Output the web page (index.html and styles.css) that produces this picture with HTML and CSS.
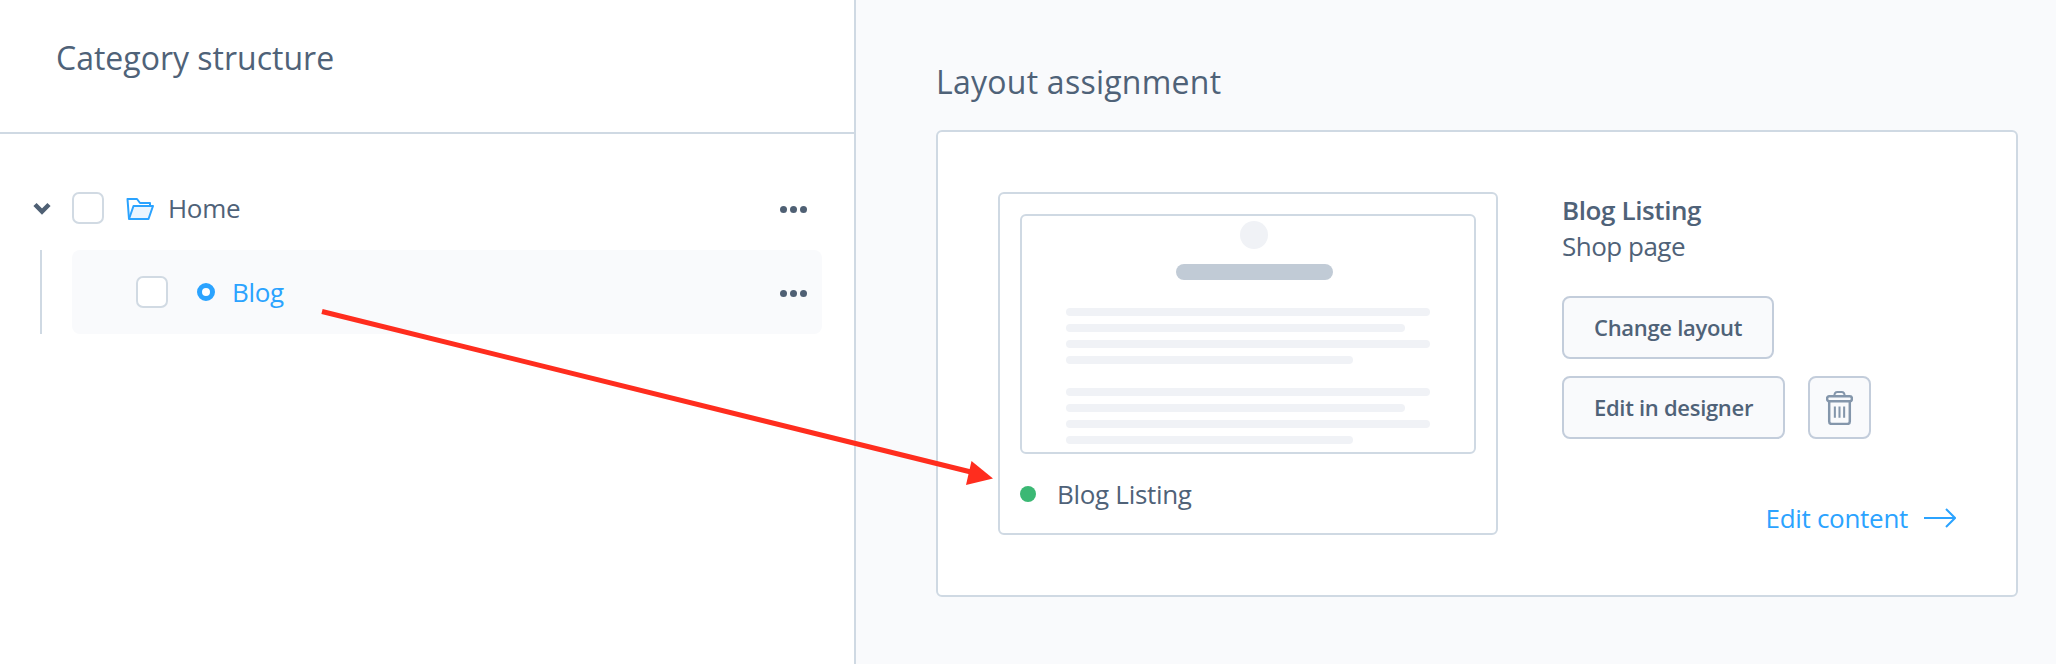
FILE: index.html
```html
<!DOCTYPE html>
<html lang="en">
<head>
    <meta charset="UTF-8">
    <meta name="viewport" content="width=device-width, initial-scale=1.0">
    <title>Category layout assignment</title>
    <link rel="stylesheet" href="styles.css">
</head>
<body>
    <div class="page">
        <div class="tree-panel">
            <div class="tree-header">
                <h2 class="panel-title">Category structure</h2>
            </div>
            <div class="tree">
                <div class="tree-row">
                    <svg class="chevron" width="18" height="13" viewBox="0 0 18 13"><path d="M2 2.500 9 9.500l7-7" fill="none" stroke="#4f6074" stroke-width="4.500"/></svg>
                    <span class="checkbox"></span>
                    <svg class="folder" width="28" height="24" viewBox="0 0 28 24">
                        <path d="M7.500 9H27l-4.500 13H3z" fill="#eaf5ff" stroke="#2ba3ff" stroke-width="2" stroke-linejoin="round"/>
                        <path d="M3 22 1.500 2H11l3 4h10v3" fill="none" stroke="#2ba3ff" stroke-width="2" stroke-linejoin="round"/>
                    </svg>
                    <span class="row-label">Home</span>
                    <span class="dots"><i></i><i></i><i></i></span>
                </div>
                <div class="child-wrap">
                    <div class="tree-row child">
                        <span class="checkbox"></span>
                        <span class="status-ring"></span>
                        <span class="row-label active">Blog</span>
                        <span class="dots"><i></i><i></i><i></i></span>
                    </div>
                </div>
            </div>
        </div>
        <div class="layout-panel">
            <h2 class="panel-title layout-title">Layout assignment</h2>
            <div class="card">
                <div class="preview">
                    <div class="thumb">
                        <div class="thumb-circle"></div>
                        <div class="thumb-bar"></div>
                        <div class="thumb-lines">
                            <div class="line w-full"></div>
                            <div class="line w-long"></div>
                            <div class="line w-full"></div>
                            <div class="line w-short"></div>
                        </div>
                        <div class="thumb-lines">
                            <div class="line w-full"></div>
                            <div class="line w-long"></div>
                            <div class="line w-full"></div>
                            <div class="line w-short"></div>
                        </div>
                    </div>
                    <div class="preview-label">
                        <span class="green-dot"></span>
                        <span>Blog Listing</span>
                    </div>
                </div>
                <div class="info">
                    <div class="info-name">Blog Listing</div>
                    <div class="info-type">Shop page</div>
                    <div class="actions">
                        <button class="btn">Change layout</button>
                        <div class="btn-row">
                            <button class="btn">Edit in designer</button>
                            <button class="btn icon-btn">
                                <svg width="27" height="34" viewBox="0 0 26 33" fill="none" stroke="#8496ab" stroke-width="2">
                                    <path d="M3 9v20.500a2.500 2.500 0 0 0 2.500 2.500h15a2.500 2.500 0 0 0 2.500-2.500V9" stroke-width="2.400"/>
                                    <rect x="1" y="5" width="24" height="5" rx="2" stroke-width="2.400"/>
                                    <path d="M8 5c0-2.500 1-4 3-4h4c2 0 3 1.500 3 4"/>
                                    <path d="M8.500 15v11M13 15v11M17.500 15v11"/>
                                </svg>
                            </button>
                        </div>
                    </div>
                    <a class="edit-link" href="#">Edit content
                        <svg width="32" height="20" viewBox="0 0 32 20" fill="none" stroke="#2ba3ff" stroke-width="2"><path d="M0 10h30M22 1l9 9-9 9"/></svg>
                    </a>
                </div>
            </div>
        </div>
        <!-- annotation drawn over both panels -->
        <svg class="annotation" width="2056" height="664" viewBox="0 0 2056 664">
            <path d="M322 311.500 975 473" stroke="#ff2d1e" stroke-width="5" fill="none"/>
            <path d="M971.500 461 993 478.500 966 485z" fill="#ff2d1e"/>
        </svg>
    </div>
</body>
</html>
```

FILE: styles.css
```css
* {
    box-sizing: border-box;
}
body {
    margin: 0;
    font-family: "Open Sans", "Noto Sans", sans-serif;
    color: #4f6278;
    background-color: #ffffff;
}
.page {
    position: relative;
    display: flex;
    width: 2056px;
    height: 664px;
    overflow: hidden;
}
.panel-title {
    margin: 0;
    font-size: 32px;
    font-weight: 400;
    line-height: 40px;
}
.layout-title {
    letter-spacing: 0.25px;
}

/* left side */
.tree-panel {
    width: 856px;
    border-right: 2px solid #cfd9e3;
}
.tree-header {
    height: 134px;
    padding: 38px 0 0 56px;
    border-bottom: 2px solid #cfd9e3;
}
.tree {
    padding: 42px 32px 0 32px;
}
.tree-row {
    display: flex;
    align-items: center;
    height: 64px;
}
.chevron {
    margin-right: 21px;
    margin-left: 1px;
}
.checkbox {
    flex: none;
    width: 32px;
    height: 32px;
    background-color: #ffffff;
    border: 2px solid #d1dae3;
    border-radius: 7px;
}
.folder {
    margin-top: 1px;
    margin-left: 22px;
}
.row-label {
    margin-left: 14px;
    font-size: 26px;
    letter-spacing: -0.3px;
}
.row-label.active {
    margin-left: 17px;
    color: #2ba3ff;
}
.dots {
    display: flex;
    gap: 3px;
    margin-top: 3px;
    margin-left: auto;
    margin-right: 15px;
}
.dots i {
    width: 7px;
    height: 7px;
    background-color: #4f6074;
    border-radius: 50%;
}
.child-wrap {
    margin-top: 10px;
    margin-left: 8px;
    padding-left: 30px;
    border-left: 2px solid #cfd9e3;
}
.child {
    height: 84px;
    padding-left: 64px;
    background-color: #f9fafc;
    border-radius: 8px;
}
.status-ring {
    width: 18px;
    height: 18px;
    margin-left: 29px;
    border: 5px solid #2ba3ff;
    border-radius: 50%;
    background-color: #ffffff;
}

/* right side */
.layout-panel {
    flex: 1;
    padding: 62px 38px 0 80px;
    background-color: #f9fafc;
}
.card {
    display: flex;
    gap: 64px;
    height: 467px;
    margin-top: 28px;
    padding: 60px;
    background-color: #ffffff;
    border: 2px solid #cfd9e3;
    border-radius: 6px;
}
.preview {
    width: 500px;
    padding: 20px;
    border: 2px solid #cfd9e3;
    border-radius: 6px;
}
.thumb {
    display: flex;
    flex-direction: column;
    align-items: center;
    height: 240px;
    padding-top: 5px;
    border: 2px solid #cfd9e3;
    border-radius: 6px;
}
.thumb-circle {
    flex: none;
    width: 28px;
    height: 28px;
    margin-left: 12px;
    background-color: #f0f2f6;
    border-radius: 50%;
}
.thumb-bar {
    flex: none;
    width: 157px;
    height: 16px;
    margin-top: 15px;
    margin-bottom: 28px;
    margin-left: 12px;
    background-color: #c1cbd6;
    border-radius: 8px;
}
.thumb-lines {
    display: flex;
    flex-direction: column;
    gap: 8px;
    width: 100%;
    padding: 0 44px;
}
.thumb-lines + .thumb-lines {
    margin-top: 24px;
}
.line {
    height: 8px;
    background-color: #f0f2f6;
    border-radius: 4px;
}
.w-full {
    width: 364px;
}
.w-long {
    width: 339px;
}
.w-short {
    width: 287px;
}
.preview-label {
    display: flex;
    align-items: center;
    gap: 21px;
    height: 40px;
    margin-top: 20px;
    font-size: 26px;
    letter-spacing: -0.3px;
}
.green-dot {
    width: 16px;
    height: 16px;
    background-color: #3bb874;
    border-radius: 50%;
}
.info {
    display: flex;
    flex: 1;
    flex-direction: column;
}
.info-name {
    font-size: 26px;
    font-weight: 600;
    line-height: 36px;
    letter-spacing: -0.4px;
}
.info-type {
    font-size: 26px;
    line-height: 36px;
    letter-spacing: -0.5px;
}
.actions {
    display: flex;
    flex-direction: column;
    align-items: flex-start;
    gap: 17px;
    margin-top: 32px;
}
.btn-row {
    display: flex;
    gap: 23px;
}
.btn {
    height: 63px;
    padding: 0 30px 2px;
    font-family: inherit;
    font-size: 22px;
    font-weight: 600;
    letter-spacing: -0.3px;
    color: #4f6278;
    background-color: #f9fafc;
    border: 2px solid #c3cddb;
    border-radius: 8px;
}
.icon-btn {
    display: flex;
    align-items: center;
    justify-content: center;
    width: 63px;
    padding: 0;
}
.edit-link {
    display: flex;
    align-items: center;
    align-self: flex-end;
    gap: 16px;
    height: 34px;
    margin-top: auto;
    font-size: 26px;
    letter-spacing: -0.3px;
    color: #2ba3ff;
    text-decoration: none;
}
.annotation {
    position: absolute;
    top: 0;
    left: 0;
    pointer-events: none;
}
```
